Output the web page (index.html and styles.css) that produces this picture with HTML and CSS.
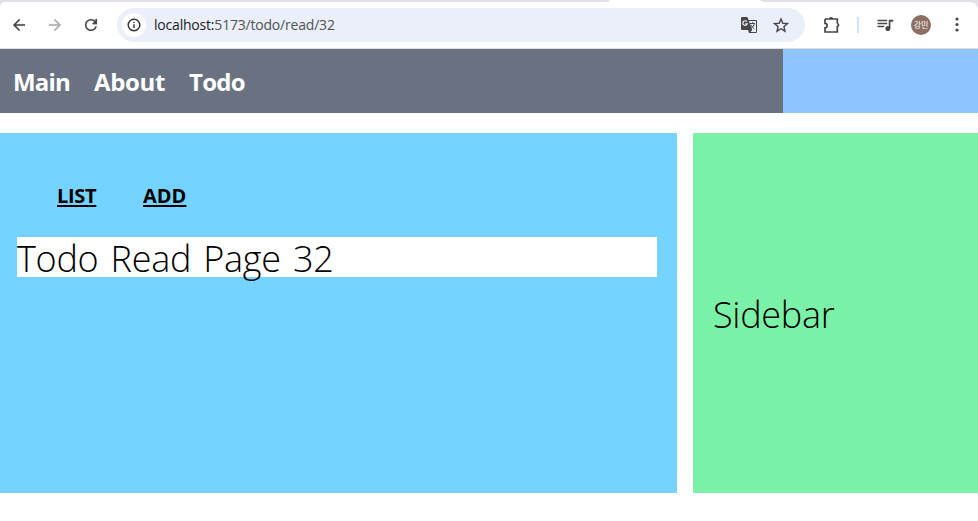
FILE: index.html
```
<!DOCTYPE html>
<html lang="ko">
<head>
<meta charset="utf-8">
<title>Todo</title>
<link rel="stylesheet" href="styles.css">
</head>
<body>
<div class="tabstrip"><span class="tab-left"></span><span class="tab-right"></span></div>
<div class="toolbar-frame">
<header class="toolbar">
  <svg class="icon back" viewBox="0 0 24 24"><path d="M20 11H7.83l5.59-5.59L12 4l-8 8 8 8 1.41-1.41L7.83 13H20z"/></svg>
  <svg class="icon forward" viewBox="0 0 24 24"><path d="M4 11h12.17l-5.59-5.59L12 4l8 8-8 8-1.41-1.41L16.17 13H4z"/></svg>
  <svg class="icon reload" viewBox="0 0 24 24"><path d="M17.65 6.35A7.96 7.96 0 0 0 12 4a8 8 0 1 0 7.73 10h-2.08A6 6 0 1 1 12 6c1.66 0 3.14.69 4.22 1.78L14 10v1h6V4h-2z"/></svg>
  <div class="address">
    <span class="info"><svg viewBox="0 0 16 16"><circle cx="8" cy="8" r="5.8"/><path d="M8 7.2v3.8M8 4.7v1.4"/></svg></span>
    <span class="url"><b>localhost:</b>5173/todo/read/32</span>
    <svg class="translate" viewBox="0 0 18 18"><path class="solid" d="M2 1h5.5l1 3H16a1 1 0 0 1 1 1v11a1 1 0 0 1-1 1H9l-1-3H2a1 1 0 0 1-1-1V2a1 1 0 0 1 1-1z"/><path class="paper" d="M8.9 5H16v11h-5.4l1.6-2z"/><path class="g" d="M7 5.7a2.3 2.3 0 1 0 .3 2.1H5.2"/><path class="glyph" d="M10 7.5h5M12.5 6.3v1.2M14.3 7.5c-.4 2-1.5 3.4-3 4.5M10.9 8.7c.7 1.6 1.7 2.9 3.4 4"/></svg>
    <svg class="star" viewBox="0 0 24 24"><path d="m12 4 2.4 5.6 6.2.5-4.7 4.1 1.4 6-5.3-3.2-5.3 3.2 1.4-6-4.7-4.1 6.2-.5z"/></svg>
  </div>
  <svg class="extension" viewBox="0 0 18 18"><path d="M2 3h12.3v4.6M14.3 10v6H2v-4.2c2.8 0 2.8-4.4 0-4.4V3"/><path class="solid" d="M6 3a2.1 2.1 0 0 1 4.2 0zM14.3 6.9a2.1 2.1 0 0 1 0 4.2z"/></svg>
  <span class="divider"></span>
  <svg class="media" viewBox="0 0 24 24"><path d="M15 5H2v2h13zm0 4H2v2h13zM2 15h9v-2H2zM17 5v8.7A3.3 3.3 0 1 0 19.2 17V7.5H23V5z"/></svg>
  <span class="avatar">강민</span>
  <svg class="menu" viewBox="0 0 6 18"><circle cx="3" cy="3" r="1.6"/><circle cx="3" cy="8.5" r="1.6"/><circle cx="3" cy="14" r="1.6"/></svg>
</header>
</div>
<nav class="navbar">
  <div class="links"><a class="main">Main</a><a class="about">About</a><a class="todo">Todo</a></div>
  <div class="nav-side"></div>
</nav>
<div class="layout">
  <main class="content">
    <div class="actions"><a class="list">LIST</a><a class="add">ADD</a></div>
    <div class="page-title"><span>Todo Read Page 32</span></div>
  </main>
  <aside class="sidebar"><span>Sidebar</span></aside>
</div>
</body>
</html>
```
FILE: styles.css
```
* { box-sizing: border-box; }
body { margin: 0; height: 521px; overflow: hidden; background: #fff; color: #000; font-family: "Open Sans", "Noto Sans CJK KR", sans-serif; }
svg { display: block; flex: none; }
.tabstrip { display: flex; justify-content: space-between; height: 2px; }
.tab-left { width: 610px; background: #dee1e6; border-bottom-right-radius: 6px 2px; }
.tab-right { width: 218px; background: #dee1e6; border-bottom-left-radius: 6px 2px; }
.toolbar-frame { background: #dee1e6; }
.toolbar { display: flex; align-items: center; height: 47px; border-bottom: 1px solid #dcdedc; border-radius: 5px 8px 0 0; background: #fff; }
.icon { width: 18px; height: 18px; fill: #474747; stroke: #474747; stroke-width: 0.3; }
.back { margin-left: 10px; }
.forward { margin-left: 18px; fill: #ababab; stroke: #ababab; }
.reload { margin-left: 18px; }
.address { display: flex; align-items: center; width: 688px; height: 34px; margin-left: 17px; border-radius: 17px; background: #ebeff9; }
.info { display: grid; place-items: center; width: 24px; height: 24px; margin-left: 5px; border-radius: 50%; background: #fff; }
.info svg { width: 16px; height: 16px; fill: none; stroke: #303030; stroke-width: 1.4; }
.url { width: 580px; margin-left: 8px; font: 14px/20px "Open Sans", sans-serif; letter-spacing: -0.2px; color: #505256; white-space: nowrap; }
.url b { font-weight: 400; color: #202124; }
.translate { width: 18px; height: 18px; margin-left: 6px; }
.translate .solid { fill: #474747; }
.translate .paper { fill: #ebeff9; }
.translate .g { fill: none; stroke: #ebeff9; stroke-width: 1.2; }
.translate .glyph { fill: none; stroke: #474747; stroke-width: 1; }
.star { width: 18px; height: 18px; margin-left: 14px; fill: none; stroke: #474747; stroke-width: 1.9; }
.extension { width: 18px; height: 18px; margin-left: 18px; fill: none; stroke: #474747; stroke-width: 1.7; }
.extension .solid { fill: #474747; stroke: none; }
.divider { width: 2px; height: 16px; margin-left: 16px; background: #d3e3fd; }
.media { width: 18px; height: 18px; margin-left: 17px; fill: #474747; }
.avatar { width: 20px; height: 20px; margin-left: 17px; border-radius: 50%; background: #8d6e63; color: #fff; font: 8px/20px "Noto Sans CJK KR", sans-serif; text-align: center; }
.menu { width: 6px; height: 18px; margin-left: 23px; fill: #474747; }
.navbar { display: flex; height: 64px; }
.links { display: flex; width: 783px; padding: 16px 0 0 13px; background: #6a7282; color: #fff; font-size: 24px; line-height: 34px; font-weight: 700; }
.links a { white-space: nowrap; }
.main { width: 81px; letter-spacing: -0.8px; }
.about { width: 95px; letter-spacing: -0.35px; }
.todo { letter-spacing: -0.7px; }
.nav-side { flex: 1; background: #8ec5ff; }
.layout { display: flex; gap: 16px; height: 360px; margin-top: 20px; }
.content { width: 677px; padding: 46px 20px 0 17px; background: #74d4ff; }
.actions { display: flex; height: 58px; padding-left: 40px; font-size: 20px; line-height: 34px; font-weight: 680; }
.actions a { height: 34px; text-decoration: underline; text-decoration-thickness: 2px; text-underline-offset: 2px; white-space: nowrap; }
.list { width: 86px; letter-spacing: -0.3px; }
.page-title { height: 40px; background: #fff; font-size: 36px; line-height: 44px; font-weight: 330; word-spacing: 3.2px; letter-spacing: -0.3px; white-space: nowrap; }
.sidebar { display: flex; align-items: center; flex: 1; padding: 4px 0 0 20px; background: #7bf1a8; font-size: 36px; line-height: 40px; font-weight: 330; letter-spacing: -0.3px; }
```
